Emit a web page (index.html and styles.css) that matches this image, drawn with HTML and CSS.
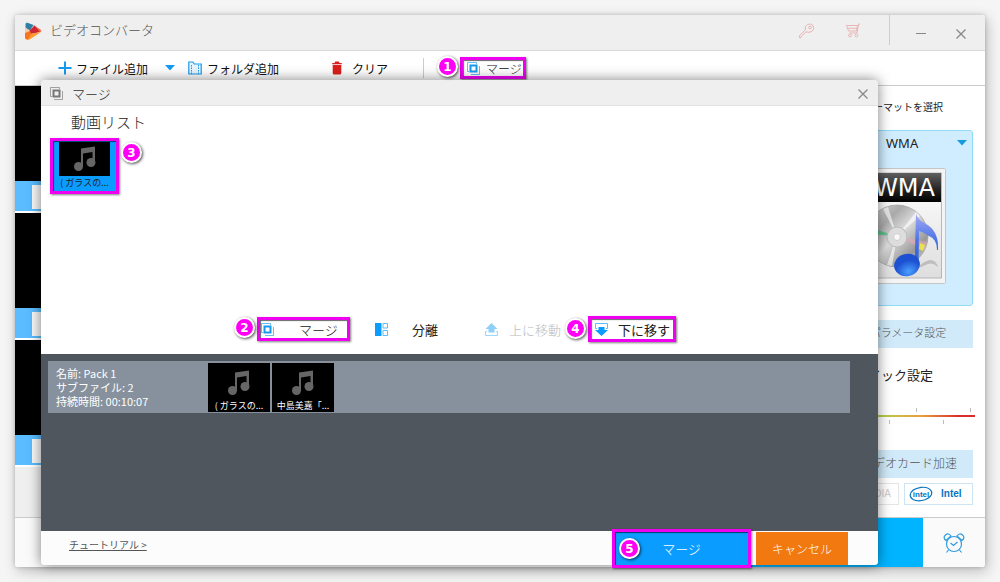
FILE: index.html
```html
<!DOCTYPE html>
<html lang="ja">
<head>
<meta charset="utf-8">
<title>ビデオコンバータ</title>
<link rel="stylesheet" href="styles.css">
</head>
<body>
<svg class="defs" aria-hidden="true">
  <defs>
    <symbol id="merge" viewBox="0 0 13 13">
      <path d="M2 9.500H.5v-9h9V2M4 12.500h8.500V4" fill="none" stroke="currentColor" stroke-opacity=".65"/>
      <path d="M3.500 3.500h6v6h-6z" fill="none" stroke="currentColor" stroke-width="2"/>
    </symbol>
    <symbol id="close" viewBox="0 0 10 10"><path d="M.5.5l9 9M9.500.5l-9 9" fill="none" stroke="currentColor" stroke-width="1.300"/></symbol>
    <symbol id="caret" viewBox="0 0 10 6"><path d="M0 0h10L5 5.500z" fill="currentColor"/></symbol>
    <symbol id="note" viewBox="0 0 24 26">
      <path d="M8 2.500L22 .5v17h-2.500V6L10 7.500V21H8z" fill="#666"/>
      <circle cx="5.500" cy="20.500" r="4.500" fill="#666"/><circle cx="18" cy="16.500" r="4.500" fill="#666"/>
    </symbol>
  </defs>
</svg>

<main class="app">
  <header class="titlebar">
    <svg class="logo" width="18" height="18" viewBox="0 0 18 18">
      <path d="M1.500 2.500Q1.500.3 3.500.8L9.500 3 6 8.500 1.500 6z" fill="#2f7fa5"/>
      <path d="M9.500 3l7 4.500q1 1 .8 2.500L11 9z" fill="#ef7442"/>
      <path d="M5 9l5.500-5.500 5.500 6.500-9 2z" fill="#cf2636"/>
      <path d="M1 5l5 4-5 5z" fill="#f4c9a2"/>
      <path d="M6 12l11-2-11 7.200q-4 1.500-5-1.200L1 12z" fill="#ff9a2b"/>
      <path d="M1 11l5-2 1 3-3 5.500Q1 17.500 1 15z" fill="#f8731f"/>
    </svg>
    <h1 class="app-name">ビデオコンバータ</h1>
    <div class="title-tools">
      <button class="icon-button pink" aria-label="登録"><svg width="16" height="16" viewBox="0 0 16 16" fill="none" stroke="currentColor"><path d="M7 8.800L2 13.800v1h-1.500v-2L6.300 6.800Q5.500 3 8.500 1.400 12 0 14.200 2.800q1.500 3.400-1.200 5.500-2.800 1.900-6 .5z"/><circle cx="11" cy="4.500" r="1.300"/></svg></button>
      <button class="icon-button pink" aria-label="購入"><svg width="16" height="16" viewBox="0 0 16 16" fill="none" stroke="currentColor"><path d="M1.500 2.500h11L11.500 8h-8zM15 1h-1.500l-1.500 9H4.500M3 5.300h9"/><circle cx="5" cy="12.500" r="1.400"/><circle cx="11.500" cy="12.500" r="1.400"/></svg></button>
    </div>
    <div class="window-tools">
      <button class="icon-button" aria-label="最小化"><svg width="10" height="10" viewBox="0 0 10 10"><path d="M0 4.500h10" stroke="currentColor"/></svg></button>
      <button class="icon-button" aria-label="閉じる"><svg width="10" height="10"><use href="#close"/></svg></button>
    </div>
  </header>

  <nav class="toolbar">
    <button class="tool add-file"><svg width="14" height="14" viewBox="0 0 14 14"><path d="M7 .5v13M.5 7h13" stroke="#169af0" stroke-width="2"/></svg><span>ファイル追加</span></button>
    <button class="tool more" aria-label="追加メニュー"><svg width="10" height="6"><use href="#caret"/></svg></button>
    <button class="tool add-folder"><svg width="14" height="14" viewBox="0 0 14 14"><path d="M.8 13V1h4l1.500 2h6.900v10z" fill="#e8f6ff" stroke="#169af0" stroke-width="1.200"/><path d="M3.500 4v9M10.500 4v9" stroke="#169af0" stroke-dasharray="1.500 1"/></svg><span>フォルダ追加</span></button>
    <button class="tool clear"><svg width="10" height="14" viewBox="0 0 10 14"><path d="M0 3.200Q0 2 1 2h1.500L3.200.5h3.600L7.500 2H9q1 0 1 1.200zM.7 4h8.600v8q0 1.500-1.500 1.500H2.200Q.7 13.500.7 12z" fill="#d9201c"/></svg><span>クリア</span></button>
    <span class="separator"></span>
    <button class="tool marked merge-top"><span class="step">1</span><svg class="blue" width="13" height="13"><use href="#merge"/></svg><span>マージ</span></button>
  </nav>

  <div class="workspace">
    <ul class="files">
      <li class="file"><div class="file-view"></div><div class="file-bar"><div class="file-info"></div></div></li>
      <li class="file"><div class="file-view"></div><div class="file-bar"><div class="file-info"></div></div></li>
      <li class="file"><div class="file-view"></div><div class="file-bar"><div class="file-info"></div></div></li>
    </ul>
    <aside class="sidebar">
      <h2 class="side-title small">フォーマットを選択</h2>
      <button class="format">
        <span class="format-head"><span>WMA</span><svg width="10" height="6"><use href="#caret"/></svg></span>
        <svg class="format-art" width="100" height="120" viewBox="847 166 100 120">
          <defs>
            <linearGradient id="band" x2="0" y2="1"><stop stop-color="#606060"/><stop offset=".55" stop-color="#252525"/><stop offset="1" stop-color="#000"/></linearGradient>
            <linearGradient id="paper" x2="0" y2="1"><stop stop-color="#fff"/><stop offset="1" stop-color="#dedede"/></linearGradient>
            <linearGradient id="disc" x2="1" y2="1"><stop stop-color="#e0e0e0"/><stop offset=".3" stop-color="#aaa"/><stop offset=".5" stop-color="#ddd"/><stop offset=".75" stop-color="#999"/><stop offset="1" stop-color="#ddd"/></linearGradient>
            <linearGradient id="blueNote" x2="0" y2="1"><stop stop-color="#a3aaf5"/><stop offset=".5" stop-color="#4a72e4"/><stop offset="1" stop-color="#2a5ad0"/></linearGradient>
            <radialGradient id="noteHead" cy=".8"><stop stop-color="#49a0ff"/><stop offset="1" stop-color="#1d51d2"/></radialGradient>
          </defs>
          <rect x="848.500" y="168.500" width="97" height="115" rx="1" fill="#f4f4f4" stroke="#c5c5c5"/>
          <rect x="853" y="173" width="88.500" height="105" fill="url(#paper)" stroke="#aaa" stroke-width=".8"/>
          <rect x="853" y="173" width="88" height="29" fill="url(#band)"/>
          <text class="art-text" x="935" y="196" text-anchor="end">WMA</text>
          <circle cx="897" cy="236" r="31" fill="url(#disc)" stroke="#999" stroke-width=".6"/>
          <path d="M897 236l-14-27 5-2zM897 236l19-24 4 4zM897 236l-10 29 5 1z" fill="#fff" opacity=".6"/>
          <path d="M897 236l-30-9v7z" fill="#39bd72" opacity=".7"/><path d="M897 236l30 6-2 8z" fill="#e8a8b8" opacity=".6"/><path d="M920 243l5 2-2 6-4-2z" fill="#e7e34d"/>
          <circle cx="897" cy="237" r="10" fill="#ddd" stroke="#bbb"/><circle cx="897" cy="237" r="3.500" fill="#f8f8f8" stroke="#ccc"/>
          <path d="M914 270q10-9 16-10 6 0 8 7-5-5-10-3z" fill="#999" opacity=".5"/>
          <path d="M916 214q2 6 10 10 13 7 12 26h-1q0-11-8-14-6-4-10-5l-.5 34-4 3z" fill="url(#blueNote)"/>
          <ellipse cx="907" cy="265" rx="13" ry="11" transform="rotate(-15 907 265)" fill="url(#noteHead)"/>
        </svg>
      </button>
      <button class="side-button params">詳細パラメータ設定</button>
      <h2 class="side-title quick">クイック設定</h2>
      <div class="quality">
        <svg class="ticks" height="4" width="152" viewBox="0 0 152 4"><path d="M41.500 0v4M95.500 0v4M149.500 0v4" stroke="#bbb"/></svg>
        <input class="range" type="range" min="0" max="100" value="10" aria-label="画質">
        <svg class="ticks" height="4" width="152" viewBox="0 0 152 4"><path d="M14.500 0v4M68.500 0v4M122.500 0v4" stroke="#bbb"/></svg>
      </div>
      <button class="side-button gpu">ビデオカード加速</button>
      <div class="chips">
        <button class="chip nvidia" disabled>NVIDIA</button>
        <button class="chip intel"><svg width="24" height="16" viewBox="0 0 24 16"><path d="M4 13.500Q9 16 16 13.800 24 10.500 22.500 5.500 20 .5 12 1.400 2 3 1.200 9q0 3 3 4.500" fill="none" stroke="#0874bd" stroke-width="1.200"/><text class="intel-mark" x="12" y="11" text-anchor="middle">intel</text></svg><span>Intel</span></button>
      </div>
    </aside>
  </div>

  <footer class="app-footer">
    <button class="start" aria-label="実行"></button>
    <button class="alarm" aria-label="タイマー"><svg width="22" height="20" viewBox="0 0 22 20" fill="none" stroke="#2f9be0" stroke-width="1.200"><circle cx="11" cy="11" r="7.500"/><path d="M7.500 10l3 2.500 4-3.500M5.500 17l-2 2.500M16.500 17l2 2.500M3 7.500Q-.5 4.500 2.500 2q3-2.500 5.500 1zM19 7.500q3.500-3 .5-5.500-3-2.500-5.500 1z"/></svg></button>
  </footer>

  <section class="dialog" role="dialog" aria-label="マージ">
    <header class="dialog-title">
      <svg width="13" height="13"><use href="#merge"/></svg>
      <span>マージ</span>
      <button class="icon-button dialog-close" aria-label="閉じる"><svg width="10" height="10"><use href="#close"/></svg></button>
    </header>
    <div class="video-list">
      <h2 class="list-title">動画リスト</h2>
      <button class="thumb marked selected"><span class="step">3</span><span class="thumb-view"><svg width="24" height="26"><use href="#note"/></svg></span><span class="thumb-name">( ガラスの...</span></button>
      <div class="actions">
        <button class="action marked merge"><span class="step">2</span><svg class="blue" width="13" height="13"><use href="#merge"/></svg><span>マージ</span></button>
        <button class="action split"><svg width="13" height="13" viewBox="0 0 13 13"><path d="M0 0h6.500v13H0z" fill="#0a9cff"/><path d="M8 .5h4.500V5H8zM8 7.500h4.500v5H8z" fill="none" stroke="#5bbcff"/></svg><span>分離</span></button>
        <button class="action up" disabled><svg width="13" height="13" viewBox="0 0 13 13"><path d="M6.500 0L12.500 6H9.500v3.500h-6V6h-3z" fill="#8fd0fa"/><path d="M2 8.500H.5v4h12v-4H11" fill="none" stroke="#9cd6fa"/></svg><span>上に移動</span></button>
        <button class="action marked down"><span class="step">4</span><svg width="13" height="13" viewBox="0 0 13 13"><path d="M6.500 13L0 7h3.500V4h6v3H13z" fill="#0a9cff"/><path d="M2 5.500H.5v-5h12v5H11" fill="none" stroke="#5bbcff"/></svg><span>下に移す</span></button>
      </div>
    </div>
    <div class="packs">
      <div class="pack">
        <div class="pack-info"><span>名前: Pack 1</span><span>サブファイル: 2</span><span>持続時間: 00:10:07</span></div>
        <div class="clip"><svg width="24" height="26"><use href="#note"/></svg><span class="thumb-name">( ガラスの...</span></div>
        <div class="clip"><svg width="24" height="26"><use href="#note"/></svg><span class="thumb-name">中島美嘉「...</span></div>
      </div>
    </div>
    <footer class="dialog-footer">
      <a class="tutorial" href="#">チュートリアル &gt;</a>
      <button class="confirm marked"><span class="step">5</span>マージ</button>
      <button class="cancel">キャンセル</button>
    </footer>
  </section>
</main>
</body>
</html>
```
FILE: styles.css
```css
* { box-sizing: border-box; }
body {
  margin: 0;
  min-height: 100vh;
  padding: 15px;
  display: flex;
  background: #f5f5f5;
  color: #222;
  font-family: "Noto Sans CJK JP", sans-serif;
  font-size: 12px;
  font-weight: 300;
}
h1, h2, ul { margin: 0; padding: 0; font-weight: inherit; list-style: none; }
button {
  margin: 0;
  padding: 0;
  border: 0;
  background: none;
  color: inherit;
  font: inherit;
  white-space: nowrap;
}
svg { display: block; flex: none; }
.defs { position: absolute; width: 0; height: 0; }
.blue { color: #169af0; }

.app {
  position: relative;
  flex: 1;
  display: flex;
  flex-direction: column;
  background: #fff;
  border-radius: 3px;
  box-shadow: 0 0 4px rgba(0, 0, 0, .2), 2px 4px 14px rgba(0, 0, 0, .24);
}
.titlebar {
  display: flex;
  align-items: center;
  height: 36px;
  padding: 0 19px 0 9px;
  background: #efefef;
  border-bottom: 1px solid #d9d9d9;
  border-radius: 3px 3px 0 0;
}
.app-name { flex: 1; padding-left: 8px; padding-bottom: 6px; color: #555; font-size: 13px; }
.logo { margin-bottom: 4px; }
.icon-button { display: grid; place-items: center; color: #888; }
.title-tools { display: flex; gap: 30px; padding-right: 28px; padding-bottom: 4px; }
.pink { color: #eab5b5; }
.window-tools {
  display: flex;
  align-items: center;
  align-self: flex-start;
  gap: 30px;
  height: 30px;
  padding-left: 26px;
  padding-top: 7px;
  border-left: 1px solid #ccc;
}

.toolbar {
  display: flex;
  align-items: center;
  height: 35px;
  padding-left: 43px;
  border-bottom: 1px solid #ccc;
}
.tool { position: relative; display: flex; align-items: center; color: #111; font-weight: 400; }
.add-file { gap: 4px; }
.more { margin: 0 13px 0 17px; color: #169af0; }
.add-folder { gap: 5px; }
.clear { margin-left: 53px; gap: 10px; }
.separator { width: 1px; height: 20px; margin-left: 35px; background: #ccc; }
.merge-top { margin-left: 39px; padding: 0 1px 0 4px; gap: 6px; height: 16px; font-weight: 300; }

.marked {
  position: relative;
  outline: 3px solid #f000f0;
  box-shadow: 1px 1px 2px 3px rgba(0, 0, 0, .5), inset 1px 1px 1px rgba(0, 0, 0, .6);
}
.step {
  position: absolute;
  z-index: 2;
  display: grid;
  place-items: center;
  width: 21px;
  height: 21px;
  border: 2px solid #fff;
  border-radius: 50%;
  background: #ff00f5;
  box-shadow: 1px 1px 3px rgba(0, 0, 0, .7);
  color: #fff;
  font: bold 12px/12px "DejaVu Sans", sans-serif;
}
.merge-top .step { left: -26px; top: -4px; }

.workspace { flex: 1; display: flex; justify-content: space-between; min-height: 0; background: #efefef; }
.files { width: 300px; }
.file { border-bottom: 2px solid #fff; }
.file-view { height: 95px; background: #000; }
.file-bar { height: 30px; padding: 4px 0 2px 17px; background: #5bbcff; }
.file-info { height: 100%; background: #f8f8f8; }
.sidebar {
  display: flex;
  flex-direction: column;
  width: 176px;
  padding: 12px 12px 11px;
  background: #fff;
}
.side-title { text-align: center; color: #222; font-weight: 400; }
.small { height: 32px; padding: 1px 0 0 2px; font-size: 10px; line-height: 16px; }
.format {
  display: flex;
  flex-direction: column;
  align-items: center;
  height: 176px;
  background: #d0edff;
  border: 1px solid #8fdcf5;
  border-radius: 3px;
}
.format-head {
  display: flex;
  align-items: center;
  justify-content: space-between;
  width: 100%;
  height: 35px;
  padding: 0 5px 11px 64px;
  color: #169ae0;
}
.format-head span { color: #222; font: 13px/16px "Noto Sans", sans-serif; }
.art-text { fill: #fff; font: 24px "DejaVu Sans", sans-serif; }
.side-button { height: 28px; background: #d0eaf9; color: #555; }
.params { margin-top: 14px; padding-bottom: 4px; font-size: 11px; }
.quick { height: 60px; padding: 17px 6px 0 0; font-size: 13px; line-height: 20px; }
.quality { display: flex; flex-direction: column; gap: 3px; }
.range { appearance: none; width: calc(100% + 2px); height: 2px; margin: 0; background: linear-gradient(90deg, #61bd46, #b4cf48 38%, #e8a040 65%, #dc2c2c 90%); }
.range::-webkit-slider-thumb { appearance: none; width: 8px; height: 14px; border-radius: 2px; background: #169af0; }
.gpu { margin-top: 26px; padding: 0 0 4px 24px; }
.chips { display: flex; justify-content: space-between; margin-top: 5px; }
.chip {
  display: flex;
  align-items: center;
  gap: 8px;
  width: 69px;
  height: 22px;
  padding: 0 4px;
  background: #fff;
  border: 1px solid #cde4f2;
  color: #0874bd;
  font: bold 10px/14px "Liberation Sans", sans-serif;
}
.nvidia { width: 78px; justify-content: flex-end; padding-right: 7px; border-color: #e5e5e5; color: #ccc; font-weight: 400; }
.intel-mark { fill: #0874bd; font: bold 8px "Liberation Sans", sans-serif; }

.app-footer { display: flex; justify-content: flex-end; height: 50px; background: #fafafa; border-top: 1px solid #ccc; border-radius: 0 0 3px 3px; }
.start { width: 175px; background: #00b4ff; }
.alarm { display: grid; place-items: center; width: 62px; }

.dialog {
  position: absolute;
  inset: 65px 107px 2px 26px;
  display: flex;
  flex-direction: column;
  background: #fff;
  border-radius: 4px;
  box-shadow: 0 0 13px rgba(0, 0, 0, .5);
}
.dialog-title {
  display: flex;
  align-items: center;
  gap: 9px;
  height: 26px;
  padding: 2px 10px 0 9px;
  background: #efefef;
  border-bottom: 1px solid #e2e2e2;
  border-radius: 4px 4px 0 0;
  color: #777;
  font-size: 13px;
}
.dialog-title span { color: #333; }
.dialog-close { margin-left: auto; }
.video-list { flex: 1; display: flex; flex-direction: column; align-items: flex-start; }
.list-title { padding: 6px 0 0 30px; color: #222; font-size: 15px; line-height: 20px; }
.thumb {
  display: flex;
  flex-direction: column;
  align-items: center;
  width: 63px;
  height: 50px;
  margin: 9px 0 0 12px;
  padding-top: 1px;
  background: #0a9cff;
}
.thumb-view { display: grid; place-items: center; width: 51px; height: 34px; background: #000; }
.thumb-name { font-size: 9px; line-height: 13px; white-space: nowrap; font-weight: 400; }
.thumb .step { left: 68px; top: 1px; }
.actions { display: flex; align-items: center; align-self: stretch; height: 28px; margin-top: auto; margin-bottom: 11px; padding-left: 219px; }
.action { display: flex; align-items: center; font-size: 13px; height: 18px; }
.merge { width: 87px; padding-left: 1px; gap: 25px; }
.split { margin-left: 28px; gap: 24px; font-weight: 400; }
.up { margin-left: 47px; gap: 11px; color: #bbb; }
.down { height: 20px; margin-left: 30px; padding: 0 3px 0 4px; gap: 10px; font-weight: 400; }
.merge .step { left: -26px; top: -3px; }
.down .step { left: -26px; top: -1px; }

.packs { height: 177px; padding: 7px 28px 0 7px; background: #50565d; }
.pack { display: flex; gap: 2px; height: 52px; padding: 2px 0 1px 8px; background: #86919d; }
.pack-info { display: flex; flex-direction: column; width: 150px; padding-top: 3px; color: #fff; font-size: 11px; line-height: 14px; font-weight: 400; }
.clip { display: flex; flex-direction: column; align-items: center; justify-content: space-between; width: 62px; padding-top: 7px; background: #000; color: #fff; }

.dialog-footer { display: flex; align-items: stretch; height: 34px; padding: 1px 30px 0 28px; background: #fcfcfc; border-radius: 0 0 4px 4px; }
.tutorial { margin-right: auto; padding-top: 4px; color: #555; font-size: 10px; line-height: 18px; font-weight: 400; }
.confirm { width: 133px; margin-right: 8px; background: #0a9cff; color: #fff; font-size: 13px; }
.confirm .step { left: 4px; top: 6px; }
.cancel { width: 92px; background: #f27810; color: #fff; font-weight: 300; }
```
